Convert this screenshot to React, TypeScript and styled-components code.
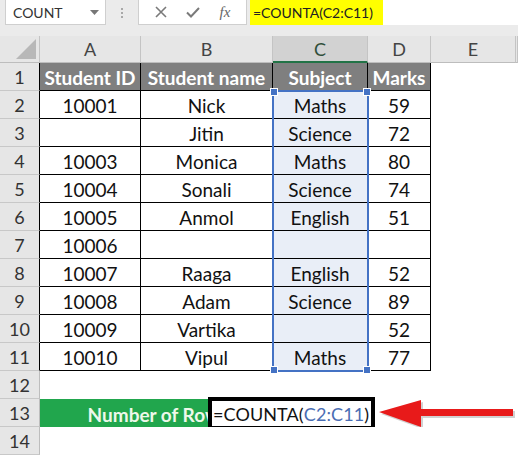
import React from 'react';
import styled, { createGlobalStyle } from 'styled-components';

const Global = createGlobalStyle`
  html, body { margin: 0; padding: 0; background: #fff; }
  body {
    font-family: Lato, "Open Sans", "Liberation Sans", sans-serif;
    width: 518px; height: 455px; overflow: hidden;
  }
`;

const COLS = '40px 101px 132px 95px 63px 85px 2px';

const Page = styled.div`
  width: 518px;
  height: 455px;
  overflow: hidden;
  background: #fff;
`;

const Toolbar = styled.div`
  height: 36px;
  display: flex;
  align-items: flex-start;
  background: #ebebeb;
  box-sizing: border-box;
`;

const NameBox = styled.div`
  margin-left: 5px;
  width: 101px;
  height: 25px;
  box-sizing: border-box;
  background: #fff;
  border: 1px solid #cfcfcf;
  border-top: none;
  display: flex;
  align-items: center;
  justify-content: space-between;
  padding: 0 6px 0 7px;
  font-size: 14px;
  color: #333;
`;

const Dots = styled.div`
  width: 32px;
  height: 25px;
  display: flex;
  flex-direction: column;
  align-items: center;
  justify-content: center;
  gap: 2px;
  & > span {
    width: 2px; height: 2px; background: #a8a8a8; display: block;
  }
`;

const FxGroup = styled.div`
  width: 109px;
  height: 25px;
  box-sizing: border-box;
  background: #fff;
  border: 1px solid #cfcfcf;
  border-top: none;
  display: flex;
  align-items: center;
  justify-content: space-around;
  padding: 0 6px;
  color: #7a7a7a;
`;

const FxText = styled.span`
  font-family: "Liberation Serif", "DejaVu Serif", serif;
  font-style: italic;
  font-size: 15px;
  color: #666;
`;

const FormulaBar = styled.div`
  margin-left: 3px;
  flex: 1;
  height: 25px;
  background: #fff;
  display: flex;
  align-items: center;
`;

const YellowFormula = styled.div`
  width: 133px;
  height: 25px;
  box-sizing: border-box;
  background: #ffff00;
  display: flex;
  align-items: center;
  padding-left: 3px;
  font-size: 14px;
  color: #222;
`;

const ColHeaderRow = styled.div`
  display: grid;
  grid-template-columns: ${COLS};
  height: 27px;
  background: #e6e6e6;
`;

const ColHeader = styled.div<{ $active?: boolean }>`
  box-sizing: border-box;
  display: flex;
  align-items: center;
  justify-content: center;
  font-size: 18px;
  color: ${(p) => (p.$active ? '#2f4f3a' : '#444')};
  background: ${(p) => (p.$active ? '#d2d2d2' : '#e6e6e6')};
  border-right: 1px solid #c4c4c4;
  border-bottom: ${(p) => (p.$active ? '2px solid #217346' : '1px solid #bdbdbd')};
`;

const Corner = styled.div`
  box-sizing: border-box;
  border-right: 1px solid #c4c4c4;
  border-bottom: 1px solid #bdbdbd;
  display: flex;
  align-items: flex-end;
  justify-content: flex-end;
  padding: 0 3px 3px 0;
`;

const Body = styled.div`
  position: relative;
`;

const Row = styled.div`
  display: grid;
  grid-template-columns: ${COLS};
  height: 28px;
`;

const RowHead = styled.div<{ $edge?: boolean }>`
  box-sizing: border-box;
  display: flex;
  align-items: center;
  justify-content: center;
  background: #e6e6e6;
  color: #333;
  font-size: 18px;
  border-bottom: 1px solid #c8c8c8;
  border-right: 1px solid ${(p) => (p.$edge ? '#000' : '#bdbdbd')};
  width: 40px;
  height: 28px;
  flex-shrink: 0;
`;

type Kind = 'head' | 'data' | 'blank';

const Cell = styled.div<{ $kind: Kind; $sel?: boolean }>`
  box-sizing: border-box;
  display: flex;
  align-items: center;
  justify-content: center;
  padding-top: 2px;
  font-size: 19px;
  white-space: nowrap;
  overflow: hidden;
  color: ${(p) => (p.$kind === 'head' ? '#fff' : '#111')};
  font-weight: ${(p) => (p.$kind === 'head' ? 700 : 400)};
  background: ${(p) =>
    p.$kind === 'head' ? '#7f7f7f' : p.$sel ? '#e9eef7' : '#fff'};
  border-right: ${(p) => (p.$kind === 'blank' ? 'none' : '1px solid #000')};
  border-bottom: ${(p) => (p.$kind === 'blank' ? 'none' : '1px solid #000')};
`;

const SelFrame = styled.div`
  position: absolute;
  left: 272px;
  top: 27px;
  width: 97px;
  height: 282px;
  box-sizing: border-box;
  border: 2px solid #4472c4;
  pointer-events: none;
`;

const Handle = styled.span<{ $top?: boolean; $left?: boolean }>`
  position: absolute;
  width: 6px;
  height: 6px;
  background: #4472c4;
  border: 1px solid #fff;
  ${(p) => (p.$top ? 'top: -4px;' : 'bottom: -4px;')}
  ${(p) => (p.$left ? 'left: -4px;' : 'right: -4px;')}
`;

const TotalRow = styled.div`
  display: flex;
  height: 28px;
  align-items: center;
`;

const GreenCell = styled.div`
  width: 168px;
  height: 28px;
  overflow: hidden;
  background: #21a64d;
  flex-shrink: 0;
`;

const GreenText = styled.div`
  width: 236px;
  height: 28px;
  display: flex;
  align-items: center;
  justify-content: center;
  padding-top: 2px;
  box-sizing: border-box;
  color: #eef8ea;
  font-weight: 700;
  font-size: 19px;
  white-space: nowrap;
`;

const FormulaBox = styled.div`
  width: 167px;
  height: 33px;
  box-sizing: border-box;
  border: 4px solid #000;
  background: #fff;
  display: flex;
  align-items: center;
  padding-left: 1px;
  padding-top: 1px;
  font-size: 18px;
  letter-spacing: 0.1px;
  color: #111;
  flex-shrink: 0;
  white-space: nowrap;
  overflow: hidden;
`;

const Ref = styled.span`
  color: #4a6db3;
`;

const ArrowSvg = styled.svg`
  margin-left: 3px;
  flex-shrink: 0;
  overflow: visible;
`;

const rows: [string, string, string, string][] = [
  ['10001', 'Nick', 'Maths', '59'],
  ['', 'Jitin', 'Science', '72'],
  ['10003', 'Monica', 'Maths', '80'],
  ['10004', 'Sonali', 'Science', '74'],
  ['10005', 'Anmol', 'English', '51'],
  ['10006', '', '', ''],
  ['10007', 'Raaga', 'English', '52'],
  ['10008', 'Adam', 'Science', '89'],
  ['10009', 'Vartika', '', '52'],
  ['10010', 'Vipul', 'Maths', '77'],
];

const EmptyRow = ({ n }: { n: number }) => (
  <Row>
    <RowHead>{n}</RowHead>
    <Cell $kind="blank" />
    <Cell $kind="blank" />
    <Cell $kind="blank" />
    <Cell $kind="blank" />
    <Cell $kind="blank" />
    <Cell $kind="blank" />
  </Row>
);

export default function App() {
  return (
    <Page>
      <Global />
      <Toolbar>
        <NameBox>
          <span>COUNT</span>
          <svg width="9" height="5" viewBox="0 0 9 5">
            <path d="M0 0 L9 0 L4.5 5 Z" fill="#777" />
          </svg>
        </NameBox>
        <Dots>
          <span />
          <span />
          <span />
        </Dots>
        <FxGroup>
          <svg width="12" height="12" viewBox="0 0 12 12">
            <path d="M1 1 L11 11 M11 1 L1 11" stroke="#7a7a7a" strokeWidth="1.6" />
          </svg>
          <svg width="14" height="11" viewBox="0 0 14 11">
            <path d="M1 5.5 L5 9.5 L13 1" stroke="#7a7a7a" strokeWidth="2" fill="none" />
          </svg>
          <FxText>fx</FxText>
        </FxGroup>
        <FormulaBar>
          <YellowFormula>=COUNTA(C2:C11)</YellowFormula>
        </FormulaBar>
      </Toolbar>

      <ColHeaderRow>
        <Corner>
          <svg width="20" height="20" viewBox="0 0 20 20">
            <path d="M20 0 L20 20 L0 20 Z" fill="#b8b8b8" />
          </svg>
        </Corner>
        <ColHeader>A</ColHeader>
        <ColHeader>B</ColHeader>
        <ColHeader $active>C</ColHeader>
        <ColHeader>D</ColHeader>
        <ColHeader>E</ColHeader>
        <ColHeader />
      </ColHeaderRow>

      <Body>
        <Row>
          <RowHead $edge>1</RowHead>
          <Cell $kind="head">Student ID</Cell>
          <Cell $kind="head">Student name</Cell>
          <Cell $kind="head">Subject</Cell>
          <Cell $kind="head">Marks</Cell>
          <Cell $kind="blank" />
          <Cell $kind="blank" />
        </Row>
        {rows.map((r, i) => (
          <Row key={i}>
            <RowHead $edge>{i + 2}</RowHead>
            <Cell $kind="data">{r[0]}</Cell>
            <Cell $kind="data">{r[1]}</Cell>
            <Cell $kind="data" $sel>
              {r[2]}
            </Cell>
            <Cell $kind="data">{r[3]}</Cell>
            <Cell $kind="blank" />
            <Cell $kind="blank" />
          </Row>
        ))}
        <EmptyRow n={12} />
        <TotalRow>
          <RowHead>13</RowHead>
          <GreenCell>
            <GreenText>Number of Rows</GreenText>
          </GreenCell>
          <FormulaBox>
            =COUNTA(<Ref>C2:C11</Ref>)
          </FormulaBox>
          <ArrowSvg width="138" height="34" viewBox="0 0 138 34">
            <polygon
              points="3,18 45,6 45,15 137,15 137,22 45,22 45,33"
              fill="#9a9a9a"
              opacity="0.45"
            />
            <polygon
              points="1,16 43,4 43,13 135,13 135,20 43,20 43,31"
              fill="#e81a1a"
            />
          </ArrowSvg>
        </TotalRow>
        <EmptyRow n={14} />
        <SelFrame>
          <Handle $top $left />
          <Handle $top />
          <Handle $left />
          <Handle />
        </SelFrame>
      </Body>
    </Page>
  );
}
